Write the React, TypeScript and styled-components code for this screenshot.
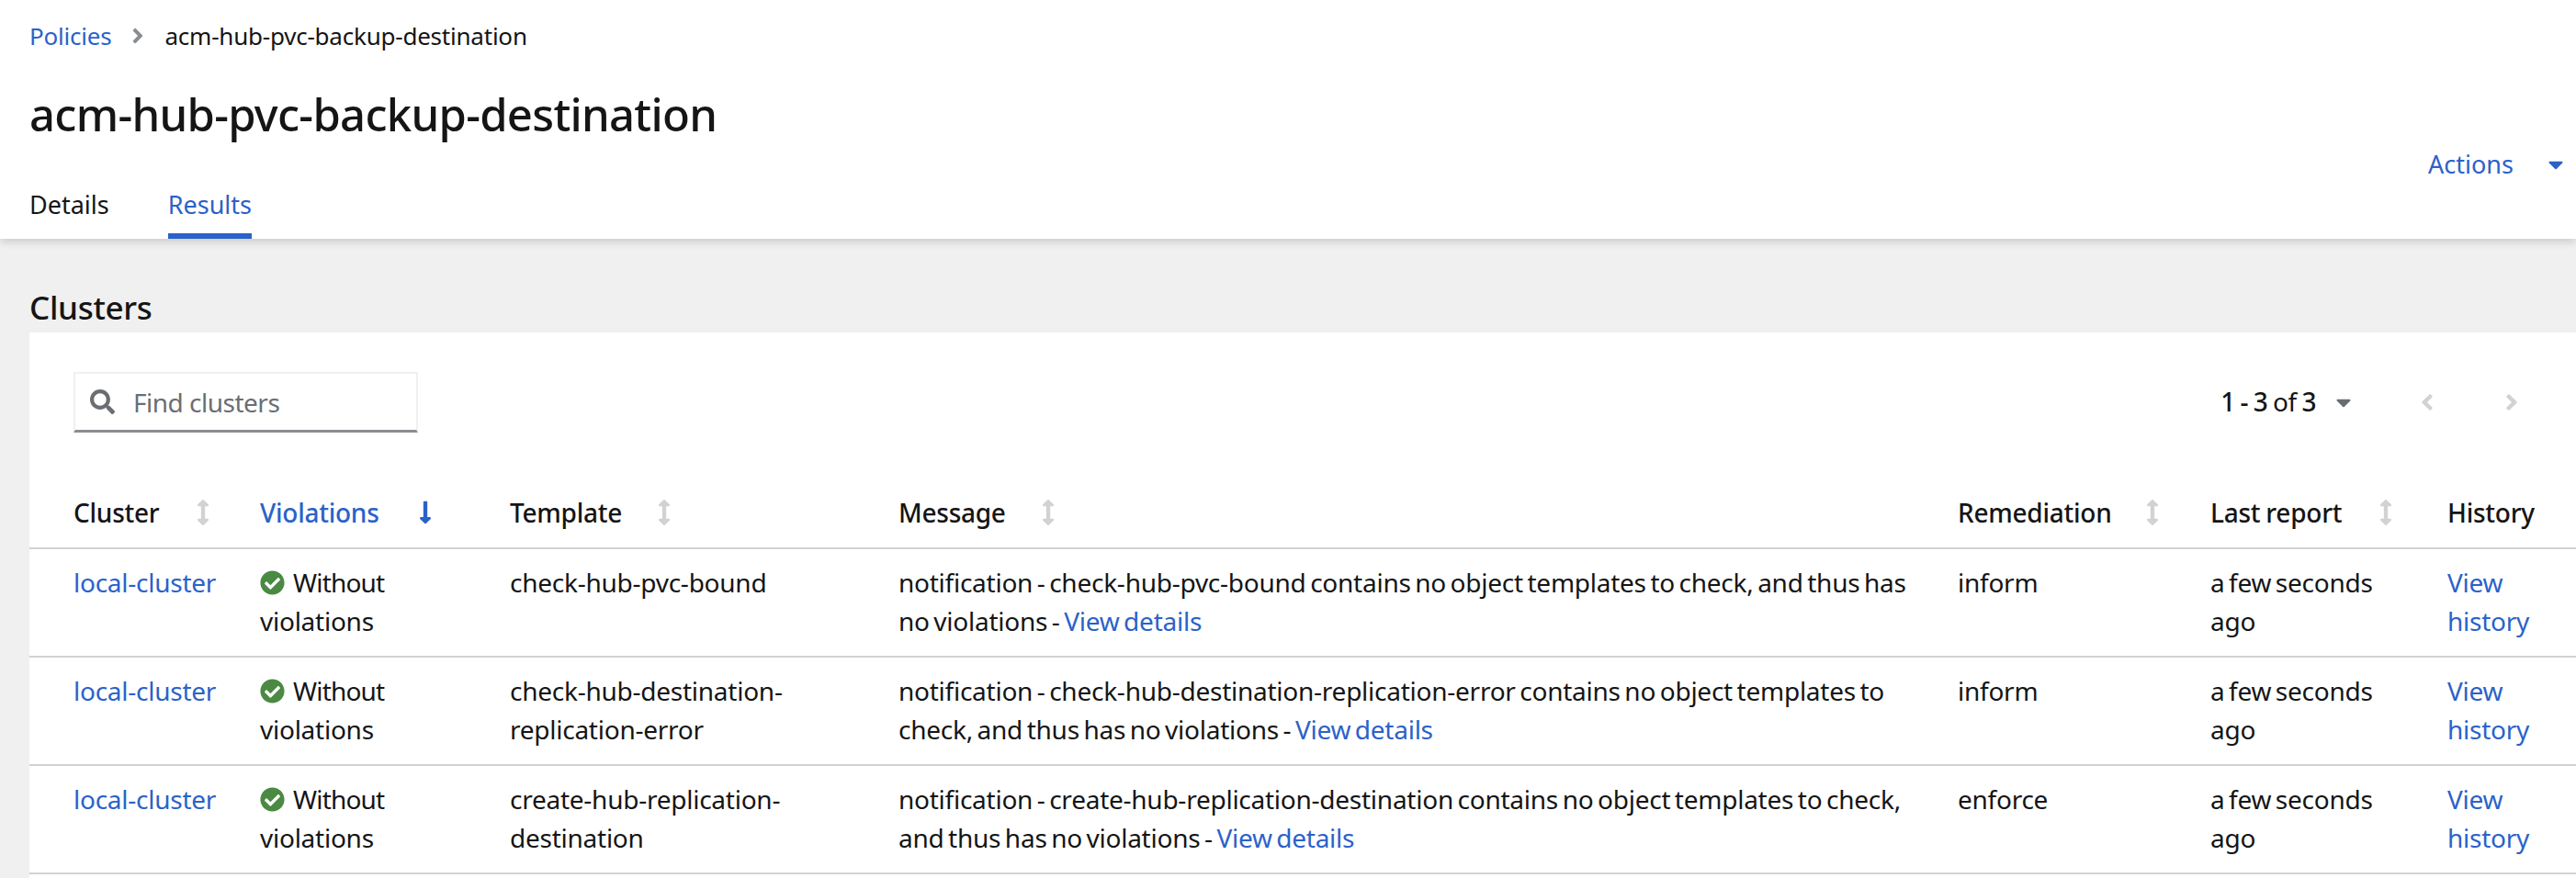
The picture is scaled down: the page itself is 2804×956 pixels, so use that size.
import React from "react";
import styled, { createGlobalStyle } from "styled-components";
import { FaAngleLeft, FaAngleRight, FaArrowsAltV, FaCaretDown, FaCheckCircle, FaLongArrowAltDown, FaSearch } from "react-icons/fa";

const BLUE = "#2b62c9";
const FONT = `"Noto Sans", "Liberation Sans", sans-serif`;

const Global = createGlobalStyle`
  html, body { margin: 0; padding: 0; height: 100%; background: #f0f0f0; overflow: hidden; }
  body { font-family: ${FONT}; font-size: 28px; line-height: 42px; color: #151515; }
  a { color: ${BLUE}; text-decoration: none; }
`;

const Page = styled.div`height: 956px; overflow: hidden; display: flex; flex-direction: column;`;

const Header = styled.header`
  height: 260px; background: #fff; display: flex; justify-content: space-between; padding: 18px 9px 0 32px;
  box-sizing: border-box; box-shadow: 0 4px 8px rgba(3,3,3,.14); position: relative; z-index: 1;
`;
const HeaderLeft = styled.div`display: flex; flex-direction: column;`;
const Breadcrumb = styled.nav`display: flex; align-items: center; letter-spacing: -0.22px; font-size: 26px;`;
const CrumbSep = styled.span`display: flex; color: #8a8d90; margin: 0 16px 0 16px; font-size: 26px;`;
const Title = styled.h1`margin: 34px 0 0; font-size: 49px; line-height: 60px; font-weight: 500; letter-spacing: -0.7px;`;
const Tabs = styled.div`display: flex; gap: 64px; margin-top: 48px;`;
const Tab = styled.div<{ $active?: boolean }>`
  padding-bottom: 10px; border-bottom: 6px solid ${p => (p.$active ? BLUE : "transparent")};
  color: ${p => (p.$active ? BLUE : "#151515")}; font-size: 27px; letter-spacing: 0;
`;
const Actions = styled.div`display: flex; align-items: center; gap: 33px; color: ${BLUE}; height: 42px; margin-top: 140px; font-size: 27px;`;

const Main = styled.main`flex: 1; padding: 50px 0 0 32px; display: flex; flex-direction: column;`;
const SectionTitle = styled.h2`margin: 0 0 2px; font-size: 35px; line-height: 50px; font-weight: 500; letter-spacing: -0.3px;`;
const Card = styled.section`flex: 1; background: #fff;`;
const Toolbar = styled.div`display: flex; justify-content: space-between; align-items: center; padding: 43px 0 0 48px; height: 66px;`;
const Search = styled.div`
  width: 375px; height: 66px; box-sizing: border-box; display: flex; align-items: center; gap: 20px; padding-left: 16px;
  border: 2px solid #f0f0f0; border-bottom: 3px solid #8a8d90; color: #6a6e73; letter-spacing: -0.5px;
`;
const Pagination = styled.div`display: flex; align-items: center; padding-right: 56px;`;
const PageCount = styled.span`letter-spacing: -0.5px; word-spacing: -1px; padding-bottom: 2px; b { font-weight: 500; }`;
const CountCaret = styled.span`display: flex; color: #6a6e73; margin: 0 64px 0 17px; font-size: 26px;`;
const PageNav = styled.span`display: flex; color: #d2d2d2; font-size: 28px; gap: 64px;`;

const Table = styled.table`
  width: 100%; table-layout: fixed; border-collapse: separate; border-spacing: 0; margin-top: 51px;
`;
const Th = styled.th<{ $active?: boolean }>`
  height: 76px; padding: 0 0 3px; text-align: left; font-weight: 500; vertical-align: middle; box-sizing: border-box;
  border-bottom: 2px solid #d2d2d2; color: ${p => (p.$active ? BLUE : "#151515")}; letter-spacing: -0.25px; word-spacing: -1px;
  &:first-child { padding-left: 48px; }
`;
const ThInner = styled.span`display: inline-flex; align-items: center;`;
const SortIcon = styled.span<{ $active?: boolean; $gap: number }>`
  display: flex; margin-left: ${p => p.$gap}px; color: ${p => (p.$active ? BLUE : "#d2d2d2")}; font-size: 28px;
`;
const Td = styled.td`
  padding: 15px 28px 17px 0; vertical-align: top; border-bottom: 2px solid #d2d2d2; letter-spacing: -0.25px; word-spacing: -2.4px;
  &:first-child { padding-left: 48px; }
`;
const OkIcon = styled.span`display: inline-block; vertical-align: -3px; color: #4a8a42; margin-right: 9px; font-size: 27px; line-height: 0;`;
const Without = styled.span`letter-spacing: -0.8px;`;

const columns = [251, 272, 423, 1153, 275, 258, 140];
const heads: { t: string; gap?: number; active?: boolean }[] = [
  { t: "Cluster", gap: 34 },
  { t: "Violations", gap: 36, active: true },
  { t: "Template", gap: 32 },
  { t: "Message", gap: 32 },
  { t: "Remediation", gap: 30 },
  { t: "Last report", gap: 34 },
  { t: "History" },
];
const rows = [
  { tpl: "check-hub-pvc-bound", msg: "notification - check-hub-pvc-bound contains no object templates to check, and thus has no violations - ", rem: "inform" },
  { tpl: "check-hub-destination-replication-error", msg: "notification - check-hub-destination-replication-error contains no object templates to check, and thus has no violations - ", rem: "inform" },
  { tpl: "create-hub-replication-destination", msg: "notification - create-hub-replication-destination contains no object templates to check, and thus has no violations - ", rem: "enforce" },
];

export default function App() {
  return (
    <Page>
      <Global />
      <Header>
        <HeaderLeft>
          <Breadcrumb>
            <a href="#">Policies</a>
            <CrumbSep><FaAngleRight /></CrumbSep>
            <span>acm-hub-pvc-backup-destination</span>
          </Breadcrumb>
          <Title>acm-hub-pvc-backup-destination</Title>
          <Tabs>
            <Tab>Details</Tab>
            <Tab $active>Results</Tab>
          </Tabs>
        </HeaderLeft>
        <Actions>Actions <FaCaretDown size={26} /></Actions>
      </Header>
      <Main>
        <SectionTitle>Clusters</SectionTitle>
        <Card>
          <Toolbar>
            <Search><FaSearch size={27} /> Find clusters</Search>
            <Pagination>
              <PageCount><b>1 - 3</b> of <b>3</b></PageCount>
              <CountCaret><FaCaretDown /></CountCaret>
              <PageNav><FaAngleLeft /><FaAngleRight /></PageNav>
            </Pagination>
          </Toolbar>
          <Table>
            <colgroup>{columns.map((w, i) => <col key={i} style={{ width: w }} />)}</colgroup>
            <thead>
              <tr>
                {heads.map(h => (
                  <Th key={h.t} $active={h.active}>
                    <ThInner>
                      {h.t}
                      {h.gap !== undefined && (
                        <SortIcon $active={h.active} $gap={h.gap}>
                          {h.active ? <FaLongArrowAltDown /> : <FaArrowsAltV />}
                        </SortIcon>
                      )}
                    </ThInner>
                  </Th>
                ))}
              </tr>
            </thead>
            <tbody>
              {rows.map(r => (
                <tr key={r.tpl}>
                  <Td><a href="#">local-cluster</a></Td>
                  <Td><OkIcon><FaCheckCircle /></OkIcon><Without>Without</Without> violations</Td>
                  <Td>{r.tpl}</Td>
                  <Td>{r.msg}<a href="#">View details</a></Td>
                  <Td>{r.rem}</Td>
                  <Td>a few seconds ago</Td>
                  <Td><a href="#">View history</a></Td>
                </tr>
              ))}
            </tbody>
          </Table>
        </Card>
      </Main>
    </Page>
  );
}
